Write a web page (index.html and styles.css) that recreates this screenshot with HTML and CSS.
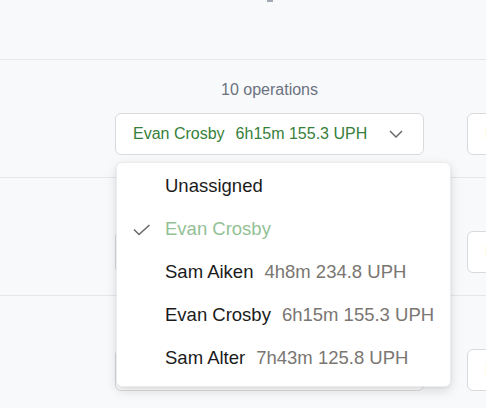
FILE: index.html
```html
<!DOCTYPE html>
<html>
<head>
<meta charset="utf-8">
<link rel="stylesheet" href="styles.css">
</head>
<body>
<div class="page">
  <div class="header"><span class="header-mark"></span></div>

  <div class="row">
    <div class="col">
      <div class="label">10 operations</div>
      <div class="select-wrap">
        <div class="select">
          <span class="sel-name">Evan Crosby</span><span class="sel-meta">6h15m 155.3 UPH</span>
          <svg class="chev" width="14" height="8" viewBox="0 0 14 8"><polyline points="1,1 7,7 13,1" fill="none" stroke="#6b6b6b" stroke-width="1.5"/></svg>
        </div>
        <div class="menu">
          <div class="item"><span class="name">Unassigned</span></div>
          <div class="item selected">
            <svg class="check" width="18" height="12" viewBox="0 0 18 12"><polyline points="1,5.5 6,10.5 16.5,1" fill="none" stroke="#6b6b6b" stroke-width="1.6"/></svg>
            <span class="name">Evan Crosby</span>
          </div>
          <div class="item"><span class="name">Sam Aiken</span><span class="meta">4h8m 234.8 UPH</span></div>
          <div class="item"><span class="name">Evan Crosby</span><span class="meta">6h15m 155.3 UPH</span></div>
          <div class="item"><span class="name">Sam Alter</span><span class="meta">7h43m 125.8 UPH</span></div>
        </div>
      </div>
    </div>
    <div class="col">
      <div class="label">10 operations</div>
      <div class="select"><span class="sel-name">Evan Crosby</span></div>
    </div>
  </div>

  <div class="row">
    <div class="col">
      <div class="label">10 operations</div>
      <div class="select"><span class="sel-name">Evan Crosby</span><span class="sel-meta">6h15m 155.3 UPH</span></div>
    </div>
    <div class="col">
      <div class="label">10 operations</div>
      <div class="select"><span class="sel-name">Evan Crosby</span></div>
    </div>
  </div>

  <div class="row">
    <div class="col">
      <div class="label">10 operations</div>
      <div class="select"><span class="sel-name">Evan Crosby</span><span class="sel-meta">6h15m 155.3 UPH</span></div>
    </div>
    <div class="col">
      <div class="label">10 operations</div>
      <div class="select"><span class="sel-name">Evan Crosby</span></div>
    </div>
  </div>
</div>
</body>
</html>
```
FILE: styles.css
```css
html, body {
  margin: 0;
  padding: 0;
  background: #f8f9fb;
  overflow: hidden;
}
body {
  width: 486px;
  height: 408px;
  font-family: "Liberation Sans", Arial, sans-serif;
}
.page {
  width: 486px;
}
.header {
  height: 59px;
  border-bottom: 1px solid #e4e6ea;
  position: relative;
}
.header-mark {
  position: absolute;
  left: 267px;
  top: 0;
  width: 6px;
  height: 2px;
  background: #a3a9b3;
}
.row {
  border-bottom: 1px solid #e4e6ea;
  display: flex;
  gap: 43px;
  padding-left: 115px;
  padding-top: 20px;
  box-sizing: border-box;
  height: 118px;
}
.col {
  width: 309px;
  flex: none;
  display: flex;
  flex-direction: column;
  gap: 13px;
}
.label {
  text-align: center;
  font-size: 16px;
  line-height: 20px;
  color: #6b7280;
}
.select-wrap {
  position: relative;
}
.select {
  height: 42px;
  box-sizing: border-box;
  border: 1px solid #d9dadd;
  border-radius: 6px;
  background: #fff;
  display: flex;
  align-items: center;
  padding: 0 16px 0 17px;
  font-size: 16px;
  white-space: nowrap;
  color: #367f3a;
}
.sel-meta {
  margin-left: 11px;
}
.chev {
  margin-left: auto;
  margin-right: 4px;
}
.menu {
  position: absolute;
  left: 1px;
  top: 49px;
  width: 335px;
  height: 225px;
  box-sizing: border-box;
  background: #fff;
  border: 1px solid #ececec;
  border-radius: 6px;
  box-shadow: 0 4px 12px rgba(0, 0, 0, 0.12), 0 1px 3px rgba(0, 0, 0, 0.06);
  padding: 2px 0 0;
  z-index: 10;
}
.item {
  height: 42.8px;
  display: flex;
  align-items: center;
  padding-left: 48px;
  position: relative;
  font-size: 18.5px;
  white-space: nowrap;
  color: #1b1b1b;
}
.item .meta {
  margin-left: 11px;
  color: #7a7672;
}
.item.selected .name {
  color: #93c196;
}
.check {
  position: absolute;
  left: 16px;
  top: 16px;
}
```
